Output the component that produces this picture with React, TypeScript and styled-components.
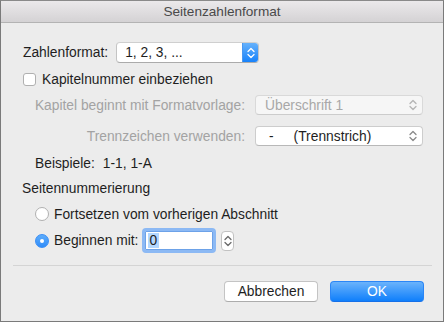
import React from 'react'
import styled, { createGlobalStyle } from 'styled-components'

const Global = createGlobalStyle`
  html, body { margin: 0; padding: 0; background: #ececec; }
  body { font-family: "Liberation Sans", Arial, sans-serif; font-size: 13.8px; color: #1e1e1e; }
`

function Chevrons({ color }: { color: string }) {
  return (
    <svg width="8" height="12" viewBox="0 0 8 12">
      <path d="M1 4.5 L4 1.5 L7 4.5" fill="none" stroke={color} strokeWidth="1.3" strokeLinecap="round" strokeLinejoin="round" />
      <path d="M1 7.5 L4 10.5 L7 7.5" fill="none" stroke={color} strokeWidth="1.3" strokeLinecap="round" strokeLinejoin="round" />
    </svg>
  )
}

function App() {
  return (
    <>
      <Global />
      <Window>
        <TitleBar>Seitenzahlenformat</TitleBar>
        <Body>
          <Row $top={19} $h={21}>
            <Label $x={22}>Zahlenformat:</Label>
            <Popup $width={143}>
              <PopupText $x={8}>1, 2, 3, ...</PopupText>
              <BlueStepper><Chevrons color="#fff" /></BlueStepper>
            </Popup>
          </Row>
          <Row $top={7} $h={19}>
            <CheckBox $x={22} />
            <Label $x={6}>Kapitelnummer einbeziehen</Label>
          </Row>
          <FieldRow $top={6}>
            <Label $x={0} $muted>Kapitel beginnt mit Formatvorlage:</Label>
            <Select $disabled>
              <PopupText $x={9} $muted>Überschrift 1</PopupText>
              <Chevrons color="#b5b5b5" />
            </Select>
          </FieldRow>
          <FieldRow $top={11}>
            <Label $x={0} $muted>Trennzeichen verwenden:</Label>
            <Select>
              <PopupText $x={13}>
                -<Gap />(Trennstrich)
              </PopupText>
              <Chevrons color="#8a8a8a" />
            </Select>
          </FieldRow>
          <Row $top={9} $h={16}>
            <Label $x={34}>Beispiele:</Label>
            <Label $x={8}>1-1, 1-A</Label>
          </Row>
          <Row $top={9} $h={16}>
            <Label $x={21}>Seitennummerierung</Label>
          </Row>
          <Row $top={10} $h={16}>
            <Radio $x={34} />
            <Label $x={5}>Fortsetzen vom vorherigen Abschnitt</Label>
          </Row>
          <Row $top={6} $h={25}>
            <Radio $x={34} $checked />
            <Label $x={5}>Beginnen mit:</Label>
            <NumberInput>
              <Selected>0</Selected>
            </NumberInput>
            <SmallStepper><Chevrons color="#6a6a6a" /></SmallStepper>
          </Row>
          <Separator />
          <Buttons>
            <Button>Abbrechen</Button>
            <Button $primary>OK</Button>
          </Buttons>
        </Body>
      </Window>
    </>
  )
}

export default App

const Window = styled.div`
  width: 444px;
  height: 322px;
  box-sizing: border-box;
  border: 1px solid #7a7a7a;
  border-top-color: #8a8a8a;
  display: flex;
  flex-direction: column;
  background: #ececec;
  overflow: hidden;
`

const TitleBar = styled.div`
  height: 21px;
  flex: none;
  display: flex;
  align-items: center;
  justify-content: center;
  background: linear-gradient(#ebe9eb, #d4d2d4);
  border-bottom: 1px solid #b3b3b3;
  color: #4a4a4a;
  font-size: 13.6px;
`

const Body = styled.div`
  display: flex;
  flex-direction: column;
`

const Row = styled.div<{ $top: number; $h: number }>`
  display: flex;
  align-items: center;
  margin-top: ${p => p.$top}px;
  height: ${p => p.$h}px;
  flex: none;
`

const FieldRow = styled.div<{ $top: number }>`
  display: grid;
  grid-template-columns: 244px 168px;
  column-gap: 10px;
  align-items: center;
  margin-top: ${p => p.$top}px;
  height: 20px;
  flex: none;
  & > span:first-child { justify-self: end; }
`

const Label = styled.span<{ $x: number; $muted?: boolean }>`
  margin-left: ${p => p.$x}px;
  color: ${p => (p.$muted ? '#a3a3a3' : '#1e1e1e')};
  white-space: nowrap;
`

const Popup = styled.div<{ $width: number }>`
  width: ${p => p.$width}px;
  height: 21px;
  box-sizing: border-box;
  border: 1px solid #c4c4c4;
  border-top-color: #cfcfcf;
  border-bottom-color: #ababab;
  border-radius: 4px;
  background: #fff;
  display: flex;
  align-items: center;
  overflow: hidden;
  margin-left: 8px;
`

const PopupText = styled.span<{ $x: number; $muted?: boolean }>`
  flex: 1;
  padding-left: ${p => p.$x}px;
  color: ${p => (p.$muted ? '#a8a8a8' : '#1e1e1e')};
  white-space: nowrap;
`

const Gap = styled.span`
  display: inline-block;
  width: 20px;
`

const BlueStepper = styled.div`
  width: 16px;
  height: 21px;
  margin-right: -1px;
  display: flex;
  align-items: center;
  justify-content: center;
  background: linear-gradient(#6ab4fb, #1480fb);
  border-left: 1px solid #4a98f0;
`

const Select = styled.div<{ $disabled?: boolean }>`
  height: 20px;
  box-sizing: border-box;
  border: 1px solid ${p => (p.$disabled ? '#d9d9d9' : '#cdcdcd')};
  border-bottom-color: ${p => (p.$disabled ? '#cccccc' : '#b8b8b8')};
  border-radius: 4px;
  background: ${p => (p.$disabled ? '#f6f6f6' : '#fff')};
  display: flex;
  align-items: center;
  padding-right: 5px;
`

const CheckBox = styled.span<{ $x: number }>`
  margin-left: ${p => p.$x}px;
  width: 13px;
  height: 13px;
  box-sizing: border-box;
  border: 1px solid #b0b0b0;
  border-radius: 3px;
  background: #fff;
  flex: none;
`

const Radio = styled.span<{ $x: number; $checked?: boolean }>`
  margin-left: ${p => p.$x}px;
  width: 14px;
  height: 14px;
  box-sizing: border-box;
  border-radius: 50%;
  flex: none;
  position: relative;
  border: 1px solid ${p => (p.$checked ? '#3a8ef5' : '#b0b0b0')};
  background: ${p => (p.$checked ? 'linear-gradient(#5eadfb, #2f8cf9)' : '#fff')};
  &::after {
    content: '';
    display: ${p => (p.$checked ? 'block' : 'none')};
    position: absolute;
    left: 4px;
    top: 4px;
    width: 4px;
    height: 4px;
    border-radius: 50%;
    background: #fff;
  }
`

const NumberInput = styled.div`
  margin-left: 4px;
  width: 74px;
  height: 25px;
  flex: none;
  box-sizing: border-box;
  border: 3px solid #8cb9f4;
  border-radius: 4px;
  background: #fff;
  display: flex;
  align-items: center;
  padding-left: 3px;
  box-shadow: inset 0 0 0 1px #6da2e8;
`

const Selected = styled.span`
  background: #b3d7ff;
  color: #1e1e1e;
  line-height: 15px;
  padding: 0 2px 0 1px;
`

const SmallStepper = styled.div`
  margin-left: 5px;
  width: 13px;
  height: 20px;
  flex: none;
  box-sizing: border-box;
  border: 1px solid #c2c2c2;
  border-radius: 4px;
  background: #fff;
  display: flex;
  align-items: center;
  justify-content: center;
`

const Separator = styled.div`
  margin: 12px 11px 0 12px;
  height: 1px;
  background: #d4d4d4;
  flex: none;
`

const Buttons = styled.div`
  display: flex;
  justify-content: flex-end;
  gap: 12px;
  margin-top: 15px;
  padding-right: 19px;
`

const Button = styled.button<{ $primary?: boolean }>`
  width: 94px;
  height: 21px;
  box-sizing: border-box;
  border-radius: 4px;
  font-family: "Liberation Sans", Arial, sans-serif;
  font-size: 13.8px;
  padding: 0;
  border: 1px solid ${p => (p.$primary ? '#2b86f6' : '#c4c4c4')};
  border-bottom-color: ${p => (p.$primary ? '#1670e8' : '#acacac')};
  background: ${p => (p.$primary ? 'linear-gradient(#6bb3fb, #0f7ffb)' : '#fff')};
  color: ${p => (p.$primary ? '#fff' : '#1e1e1e')};
`
